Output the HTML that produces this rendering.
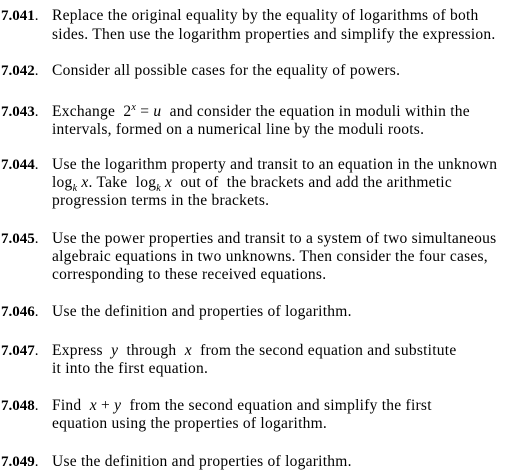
<!DOCTYPE html>
<html><head><style>
body{margin:0;width:506px;height:472px;background:#fff;overflow:hidden;font-family:"Liberation Serif",serif;font-size:15.5px;letter-spacing:0.25px;color:#000;position:relative}
.l{position:absolute;left:52px;line-height:18px;white-space:nowrap}
.n{position:absolute;left:1px;line-height:18px;font-weight:bold;font-size:15px;letter-spacing:0}
.n span{font-weight:normal}
i{font-style:italic}
sub,sup{font-size:10px;line-height:0}
</style></head><body>
<div class="n" style="top:7px">7.041<span>.</span></div>
<div class="l" style="top:7px">Replace the original equality by the equality of logarithms of both</div>
<div class="l" style="top:26px">sides. Then use the logarithm properties and simplify the expression.</div>
<div class="n" style="top:62px">7.042<span>.</span></div>
<div class="l" style="top:62px">Consider all possible cases for the equality of powers.</div>
<div class="n" style="top:103px">7.043<span>.</span></div>
<div class="l" style="top:103px">Exchange &nbsp;2<sup><i>x</i></sup> = <i>u</i> &nbsp;and consider the equation in moduli within the</div>
<div class="l" style="top:121px">intervals, formed on a numerical line by the moduli roots.</div>
<div class="n" style="top:156px">7.044<span>.</span></div>
<div class="l" style="top:156px">Use the logarithm property and transit to an equation in the unknown</div>
<div class="l" style="top:174px">log<sub><i>k</i></sub> <i>x</i>. Take &nbsp;log<sub><i>k</i></sub> <i>x</i> &nbsp;out of &nbsp;the brackets and add the arithmetic</div>
<div class="l" style="top:192px">progression terms in the brackets.</div>
<div class="n" style="top:230px">7.045<span>.</span></div>
<div class="l" style="top:230px">Use the power properties and transit to a system of two simultaneous</div>
<div class="l" style="top:248px">algebraic equations in two unknowns. Then consider the four cases,</div>
<div class="l" style="top:266px">corresponding to these received equations.</div>
<div class="n" style="top:303px">7.046<span>.</span></div>
<div class="l" style="top:303px">Use the definition and properties of logarithm.</div>
<div class="n" style="top:342px">7.047<span>.</span></div>
<div class="l" style="top:342px">Express &nbsp;<i>y</i> &nbsp;through &nbsp;<i>x</i> &nbsp;from the second equation and substitute</div>
<div class="l" style="top:360px">it into the first equation.</div>
<div class="n" style="top:397px">7.048<span>.</span></div>
<div class="l" style="top:397px">Find &nbsp;<i>x</i> + <i>y</i> &nbsp;from the second equation and simplify the first</div>
<div class="l" style="top:415px">equation using the properties of logarithm.</div>
<div class="n" style="top:453px">7.049<span>.</span></div>
<div class="l" style="top:453px">Use the definition and properties of logarithm.</div>
</body></html>
